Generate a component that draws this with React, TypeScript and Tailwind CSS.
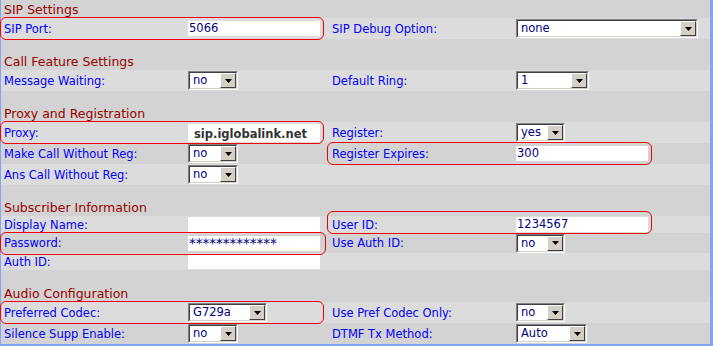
import React from "react";

const LIGHT = "bg-[#dcdcdc]";
const DARK = "bg-[#d3d3d3]";

const Label = ({ children }: { children?: React.ReactNode }) => (
  <div className="pl-[3px] pt-[1px] text-[11.5px] leading-[13px] text-[#0000ff] whitespace-nowrap">{children}</div>
);

const TextBox = ({ value, big }: { value?: string; big?: boolean }) => (
  <div
    className={`w-[132px] h-[15px] bg-white pl-[1px] leading-[15px] text-[#000080] whitespace-nowrap ${
      big ? "text-[13.5px]" : "text-[11.5px]"
    }`}
  >
    {value}
  </div>
);

const Select = ({ value, w }: { value: string; w: string }) => (
  <div className={`flex h-[19px] ${w} border border-t-[#808080] border-l-[#808080] border-b-white border-r-white`}>
    <div className="flex flex-1 border border-t-[#404040] border-l-[#404040] border-b-[#d4d0c8] border-r-[#d4d0c8] bg-white">
      <div className="flex-1 pl-[3px] text-[11.5px] leading-[15px] text-[#000080]">{value}</div>
      <div className="flex w-[16px] items-center justify-center border border-t-white border-l-white border-b-[#404040] border-r-[#404040] bg-[#d4d0c8]">
        <svg width="7" height="4" viewBox="0 0 7 4">
          <polygon points="0,0 7,0 3.5,4" fill="#000" />
        </svg>
      </div>
    </div>
  </div>
);

const Row = ({
  bg,
  h,
  l1,
  c1,
  l2,
  c2,
}: {
  bg: string;
  h: string;
  l1?: string;
  c1?: React.ReactNode;
  l2?: string;
  c2?: React.ReactNode;
}) => (
  <div className={`grid grid-cols-[187px_141px_187px_1fr] items-center ${h} ${bg}`}>
    <Label>{l1}</Label>
    <div>{c1}</div>
    <Label>{l2}</Label>
    <div>{c2}</div>
  </div>
);

const Header = ({ title }: { title: string }) => (
  <div className={`h-[18px] pl-[3px] pt-[2px] text-[12.5px] leading-[16px] text-[#990000] ${DARK}`}>{title}</div>
);

const Spacer = ({ h }: { h: string }) => <div className={`${h} ${DARK}`} />;

const Mark = ({ pos }: { pos: string }) => (
  <div className={`absolute ${pos} rounded-[6px] border-[1.5px] border-[#f00000] pointer-events-none`} />
);

export default function App() {
  return (
    <div className="relative w-[713px] h-[346px] overflow-hidden bg-white font-['DejaVu_Sans',sans-serif]">
      <div className="h-[346px] border-l border-r-[3px] border-b-2 border-[#7ea6f4]">
        <Header title="SIP Settings" />
        <Row bg={LIGHT} h="h-[21px]" l1="SIP Port:" c1={<TextBox value="5066" />} l2="SIP Debug Option:" c2={<Select value="none" w="w-[182px]" />} />
        <Spacer h="h-[13px]" />
        <Header title="Call Feature Settings" />
        <Row bg={LIGHT} h="h-[21px]" l1="Message Waiting:" c1={<Select value="no" w="w-[50px]" />} l2="Default Ring:" c2={<Select value="1" w="w-[73px]" />} />
        <Spacer h="h-[13px]" />
        <Header title="Proxy and Registration" />
        <Row
          bg={LIGHT}
          h="h-[21px]"
          l1="Proxy:"
          c1={
            <div className="w-[132px] h-[18px] bg-white pl-[6px] pt-[1px] text-[11.5px] leading-[18px] font-bold text-[#333333] whitespace-nowrap">
              sip.iglobalink.net
            </div>
          }
          l2="Register:"
          c2={<Select value="yes" w="w-[49px]" />}
        />
        <Row bg={DARK} h="h-[21px]" l1="Make Call Without Reg:" c1={<Select value="no" w="w-[50px]" />} l2="Register Expires:" c2={<TextBox value="300" />} />
        <Row bg={LIGHT} h="h-[21px]" l1="Ans Call Without Reg:" c1={<Select value="no" w="w-[50px]" />} />
        <Spacer h="h-[13px]" />
        <Header title="Subscriber Information" />
        <Row bg={LIGHT} h="h-[17px]" l1="Display Name:" c1={<TextBox />} l2="User ID:" c2={<TextBox value="1234567" />} />
        <Row bg={DARK} h="h-[20px]" l1="Password:" c1={<TextBox value="*************" big />} l2="Use Auth ID:" c2={<Select value="no" w="w-[49px]" />} />
        <Row bg={LIGHT} h="h-[17px]" l1="Auth ID:" c1={<TextBox />} />
        <Spacer h="h-[14px]" />
        <Header title="Audio Configuration" />
        <Row bg={LIGHT} h="h-[21px]" l1="Preferred Codec:" c1={<Select value="G729a" w="w-[79px]" />} l2="Use Pref Codec Only:" c2={<Select value="no" w="w-[49px]" />} />
        <Row bg={DARK} h="h-[21px]" l1="Silence Supp Enable:" c1={<Select value="no" w="w-[50px]" />} l2="DTMF Tx Method:" c2={<Select value="Auto" w="w-[71px]" />} />
      </div>

      <Mark pos="left-0 top-[17px] w-[324px] h-[23px]" />
      <Mark pos="left-0 top-[121px] w-[324px] h-[23px]" />
      <Mark pos="left-[327px] top-[142px] w-[325px] h-[23px]" />
      <Mark pos="left-[327px] top-[211px] w-[325px] h-[23px]" />
      <Mark pos="left-0 top-[232px] w-[326px] h-[23px]" />
      <Mark pos="left-0 top-[301px] w-[324px] h-[23px]" />
    </div>
  );
}
